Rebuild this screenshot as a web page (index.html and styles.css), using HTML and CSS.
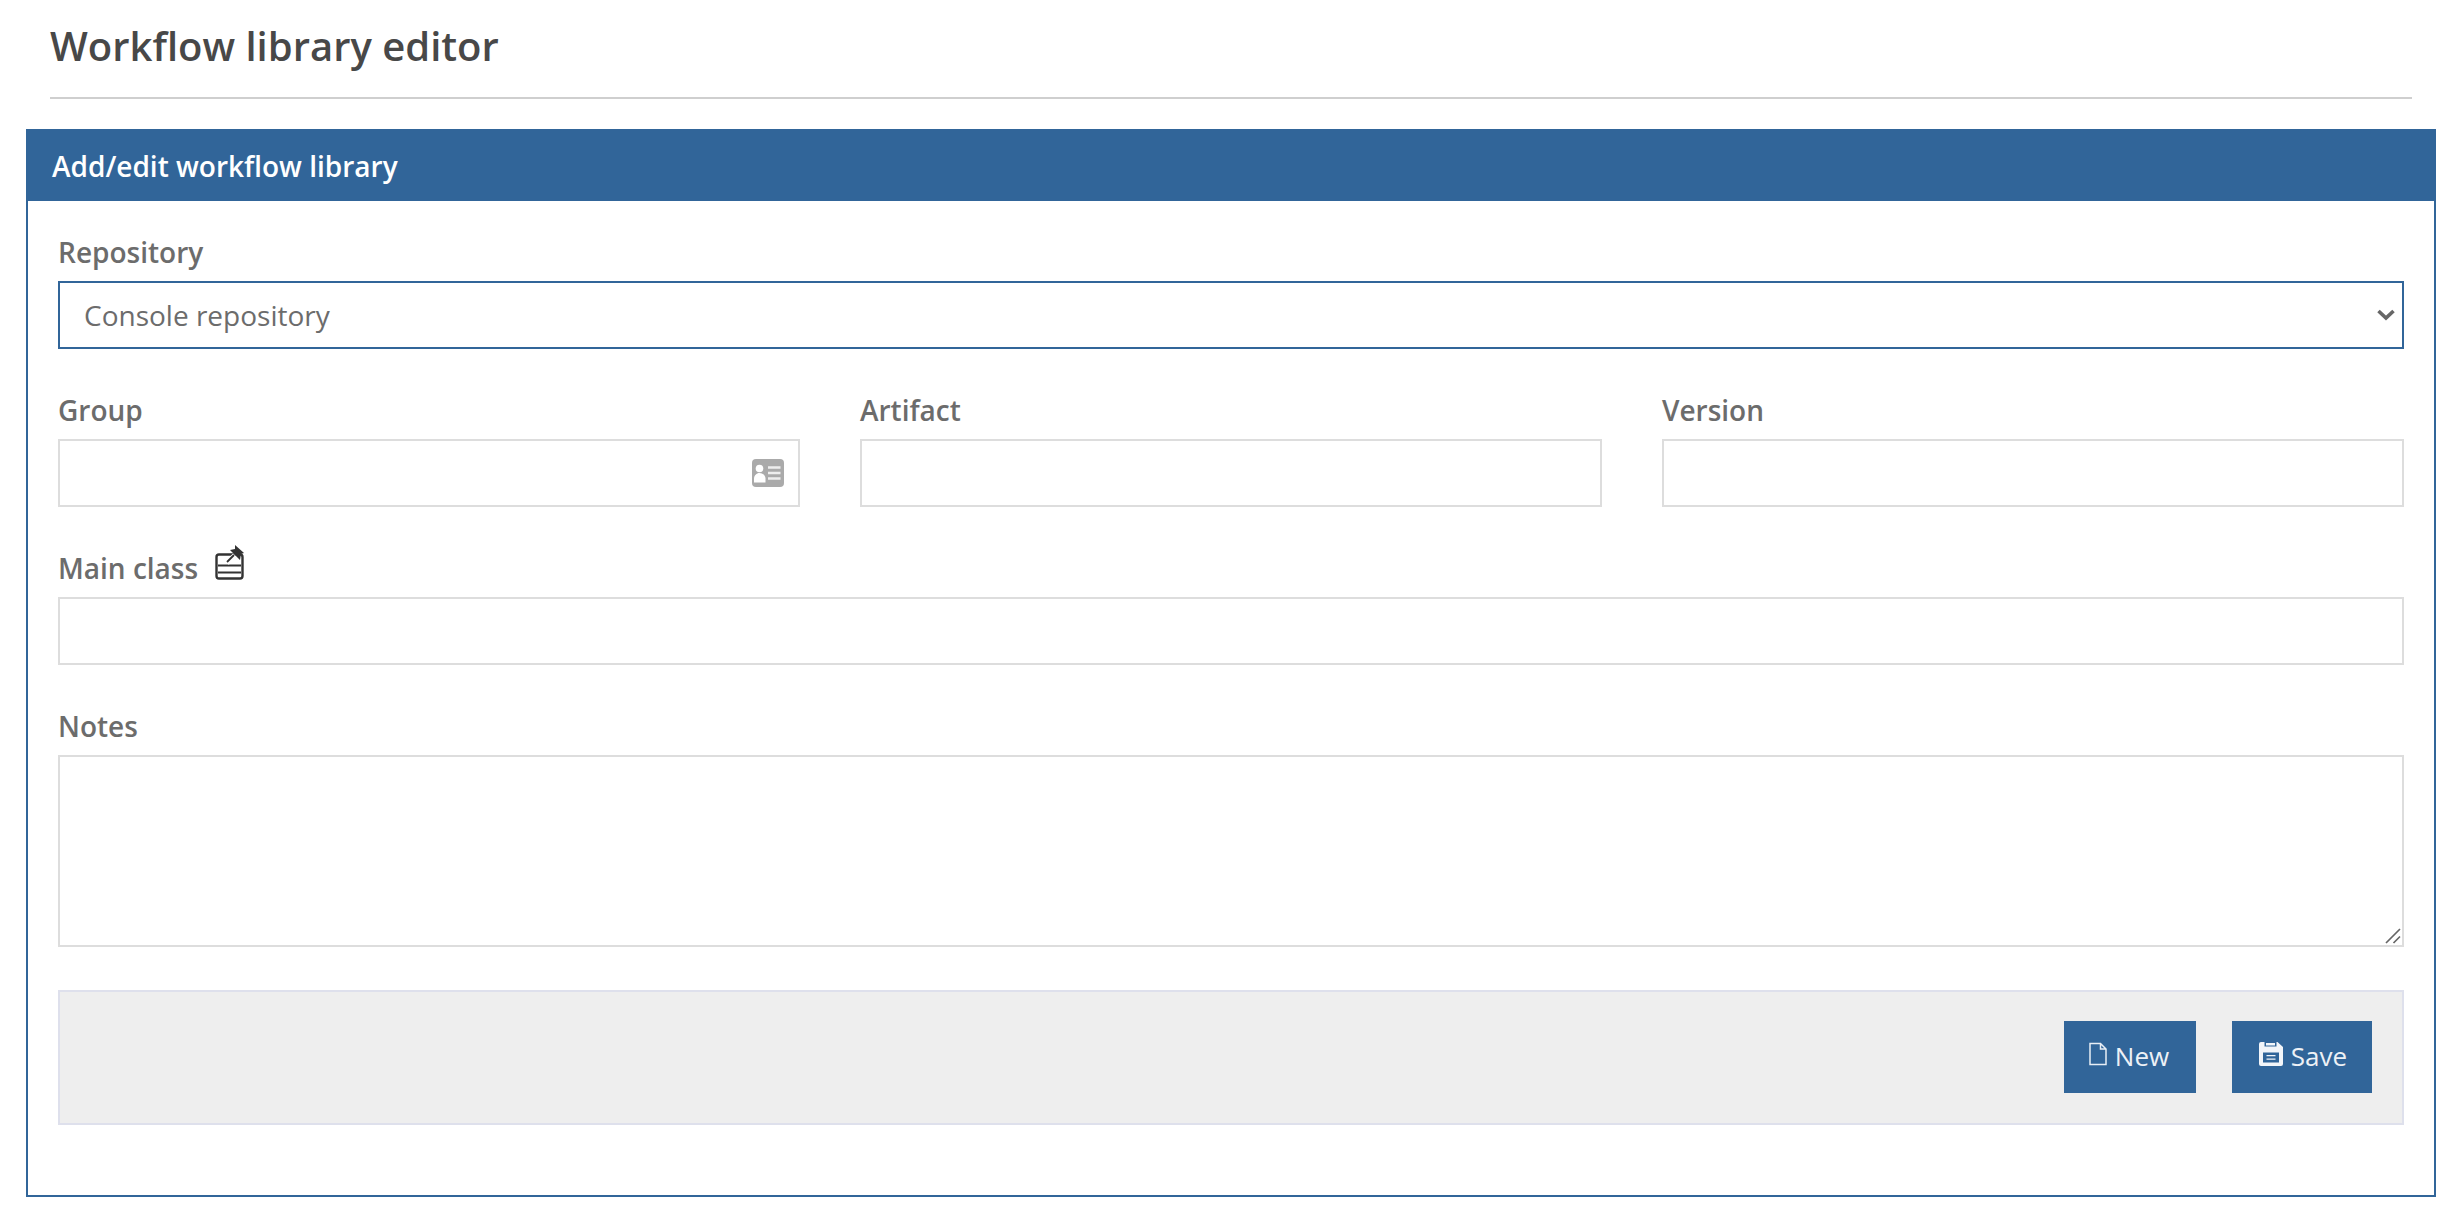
FILE: index.html
```html
<!DOCTYPE html>
<html>
  <head>
    <meta charset="UTF-8">
    <title>Workflow library editor</title>
    <link rel="stylesheet" href="styles.css">
  </head>
  <body>
    <div class="page-head">
      <h1 class="page-title">Workflow library editor</h1>
    </div>
    <div class="panel">
      <div class="panel-head">Add/edit workflow library</div>
      <form class="panel-body">
        <div class="field field-repo">
          <label class="label" for="repository">Repository</label>
          <div class="select-wrap">
            <select class="select" id="repository">
              <option>Console repository</option>
            </select>
            <svg class="chevron" viewBox="0 0 18 12"><path d="M1.500 2L9 9l7.500-7" fill="none" stroke="#666" stroke-width="3.600"/></svg>
          </div>
        </div>
        <div class="row">
          <div class="field">
            <label class="label" for="group">Group</label>
            <div class="input-wrap">
              <input class="input" id="group" type="text">
              <svg class="card-icon" viewBox="0 0 32 28">
                <rect width="32" height="28" rx="4" fill="#aaa"/>
                <circle cx="7.500" cy="9.500" r="3.800" fill="#fff"/>
                <path d="M2 23.500v-4c0-3 2.500-5.500 5.500-5.500s6 2.500 6 5.500v4z" fill="#fff"/>
                <path d="M16 8.500h12.500M16 14h12.500M16 19.500h12.500" stroke="#eee" stroke-width="2.600"/>
              </svg>
            </div>
          </div>
          <div class="field">
            <label class="label" for="artifact">Artifact</label>
            <input class="input" id="artifact" type="text">
          </div>
          <div class="field">
            <label class="label" for="version">Version</label>
            <input class="input" id="version" type="text">
          </div>
        </div>
        <div class="field">
          <div class="label-row">
            <label class="label" for="mainClass">Main class</label>
            <svg class="pin-icon" viewBox="0 0 30 36">
              <rect x="1.500" y="9.500" width="26" height="24" rx="2.500" fill="none" stroke="#333" stroke-width="2.400"/>
              <path d="M3 20.500h23M3 27.500h23" stroke="#333" stroke-width="2"/>
              <path d="M12 18l8-8" stroke="#fff" stroke-width="5"/>
              <path d="M12 17l7-7" stroke="#333" stroke-width="1.800"/>
              <path d="M20 0l9 8-3 1-1 6-10-10 5-1z" fill="#333"/>
            </svg>
          </div>
          <input class="input" id="mainClass" type="text">
        </div>
        <div class="field field-notes">
          <label class="label" for="notes">Notes</label>
          <div class="input-wrap">
            <textarea class="input notes" id="notes"></textarea>
            <svg class="grip" viewBox="0 0 16 16"><path d="M1 15L15 1M8.500 15L15 8.500" stroke="#666" stroke-width="1.700"/></svg>
          </div>
        </div>
        <div class="actions">
          <button class="btn" type="button">
            <svg class="btn-icon btn-icon-new" viewBox="0 0 18 23"><path d="M1 1h10.500L17 6.500V22H1zM11.500 1v5.500H17" fill="none" stroke="#e8eef5" stroke-width="1.500"/></svg>
            New
          </button>
          <button class="btn" type="button">
            <svg class="btn-icon" viewBox="0 0 24 24"><path fill="#f2f5f9" fill-rule="evenodd" d="M2 0h3.500v4.500h12V0h1L24 5v17a2 2 0 0 1-2 2H2a2 2 0 0 1-2-2V2a2 2 0 0 1 2-2zM7 1h9v2.500H7zM4 10.500v10h16v-10zM7.500 13h9v1.300h-9zM7.500 16.500h9v1.300h-9z"/></svg>
            Save
          </button>
        </div>
      </form>
    </div>
  </body>
</html>
```

FILE: styles.css
```css
* {
  box-sizing: border-box;
}
body {
  margin: 0;
  padding: 0 28px 0 26px;
  background-color: #fff;
  font-family: 'Open Sans', 'Noto Sans', sans-serif;
  color: #666;
}
.page-head {
  margin: 0 24px;
  height: 99px;
  border-bottom: 2px solid #cfcfcf;
}
.page-title {
  margin: 0;
  padding-top: 21px;
  font-size: 40px;
  line-height: 50px;
  font-weight: 600;
  color: #484848;
}
.panel {
  margin-top: 30px;
  height: 1068px;
  border: 2px solid #316599;
  border-top: none;
}
.panel-head {
  height: 72px;
  margin: 0 -2px;
  padding: 0 26px;
  background-color: #316599;
  color: #fff;
  font-size: 28px;
  font-weight: 600;
  line-height: 74px;
}
.panel-body {
  padding: 30px 30px 0;
}
.label {
  display: block;
  height: 50px;
  font-size: 28px;
  font-weight: 600;
  line-height: 43px;
  color: #6c6c6c;
}
.field {
  flex: 1;
}
.field-repo {
  margin-bottom: 40px;
}
.row {
  display: flex;
  gap: 60px;
  margin-bottom: 40px;
}
.select-wrap,
.input-wrap {
  position: relative;
}
.select {
  display: block;
  width: 100%;
  height: 68px;
  padding: 0 24px;
  appearance: none;
  background: #fff;
  border: 2px solid #316599;
  border-radius: 0;
  outline: none;
  font-family: inherit;
  font-size: 28px;
  color: #6c6c6c;
}
.chevron {
  position: absolute;
  top: 28px;
  right: 9px;
  width: 18px;
  height: 12px;
}
.input {
  display: block;
  width: 100%;
  height: 68px;
  padding: 0 24px;
  background: #fff;
  border: 2px solid #ddd;
  border-radius: 0;
  outline: none;
}
.card-icon {
  position: absolute;
  top: 20px;
  right: 16px;
  width: 32px;
  height: 28px;
}
.label-row {
  display: flex;
  align-items: flex-start;
  height: 50px;
}
.pin-icon {
  width: 30px;
  height: 36px;
  margin: -2px 0 0 17px;
}
.field-notes {
  margin-top: 40px;
}
.notes {
  height: 192px;
  resize: none;
}
.grip {
  position: absolute;
  right: 3px;
  bottom: 3px;
  width: 16px;
  height: 16px;
}
.actions {
  display: flex;
  justify-content: flex-end;
  gap: 36px;
  height: 135px;
  margin-top: 43px;
  padding: 29px 30px 0;
  background-color: #eee;
  border: 2px solid #dee0ec;
}
.btn {
  display: flex;
  align-items: center;
  justify-content: center;
  gap: 8px;
  width: 132px;
  height: 72px;
  padding: 0 2px 3px 0;
  background-color: #316599;
  border: none;
  border-radius: 0;
  font-family: inherit;
  font-size: 26px;
  color: #edf1f6;
}
.btn + .btn {
  width: 140px;
  padding-left: 2px;
  padding-right: 0;
}
.btn-icon {
  width: 24px;
  height: 24px;
  margin-top: -4px;
}
.btn-icon-new {
  width: 18px;
}
```
